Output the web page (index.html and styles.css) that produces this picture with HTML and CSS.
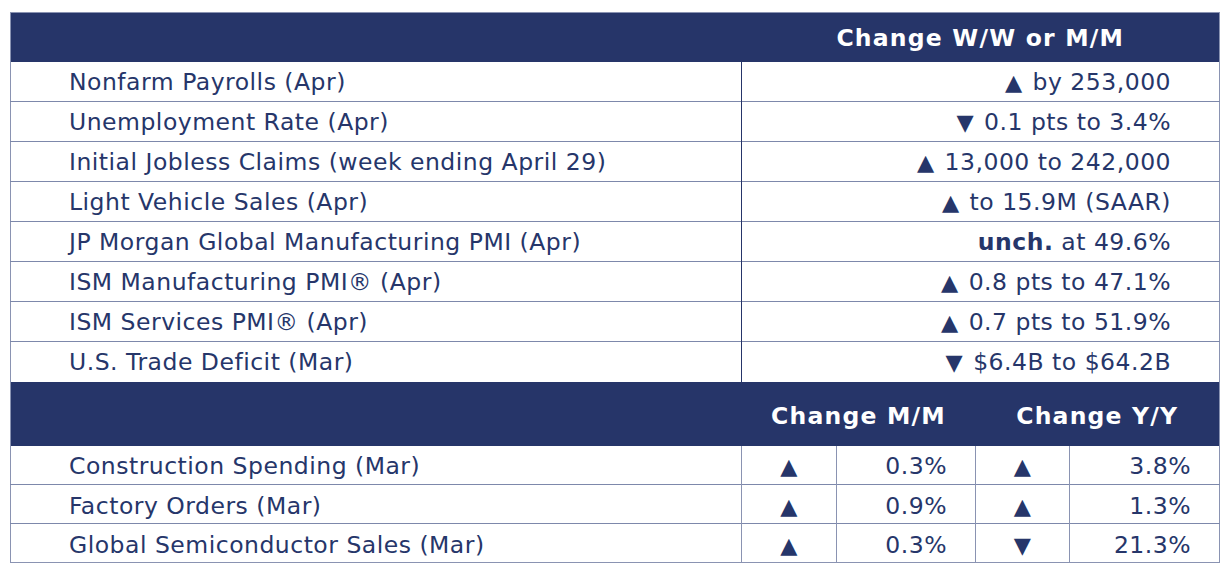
FILE: index.html
```html
<!DOCTYPE html>
<html>
<head>
<meta charset="utf-8">
<link rel="stylesheet" href="styles.css">
</head>
<body>
<table class="econ">
  <colgroup>
    <col class="c-label">
    <col class="c-a1">
    <col class="c-v1">
    <col class="c-a2">
    <col class="c-v2">
  </colgroup>
  <tr class="head head-1">
    <th></th>
    <th colspan="4" class="head-title">Change W/W or M/M</th>
  </tr>
  <tr class="row"><td class="label">Nonfarm Payrolls (Apr)</td><td colspan="4" class="val"><span class="tri">▲</span> by 253,000</td></tr>
  <tr class="row"><td class="label">Unemployment Rate (Apr)</td><td colspan="4" class="val"><span class="tri">▼</span> 0.1 pts to 3.4%</td></tr>
  <tr class="row"><td class="label">Initial Jobless Claims (week ending April 29)</td><td colspan="4" class="val"><span class="tri">▲</span> 13,000 to 242,000</td></tr>
  <tr class="row"><td class="label">Light Vehicle Sales (Apr)</td><td colspan="4" class="val"><span class="tri">▲</span> to 15.9M (SAAR)</td></tr>
  <tr class="row"><td class="label">JP Morgan Global Manufacturing PMI (Apr)</td><td colspan="4" class="val"><b>unch.</b> at 49.6%</td></tr>
  <tr class="row"><td class="label">ISM Manufacturing PMI® (Apr)</td><td colspan="4" class="val"><span class="tri">▲</span> 0.8 pts to 47.1%</td></tr>
  <tr class="row"><td class="label">ISM Services PMI® (Apr)</td><td colspan="4" class="val"><span class="tri">▲</span> 0.7 pts to 51.9%</td></tr>
  <tr class="row"><td class="label">U.S. Trade Deficit (Mar)</td><td colspan="4" class="val"><span class="tri">▼</span> $6.4B to $64.2B</td></tr>
  <tr class="head head-2">
    <th></th>
    <th colspan="2" class="head-title">Change M/M</th>
    <th colspan="2" class="head-title">Change Y/Y</th>
  </tr>
  <tr class="row row-b"><td class="label">Construction Spending (Mar)</td><td class="arrow"><span class="tri">▲</span></td><td class="num">0.3%</td><td class="arrow"><span class="tri">▲</span></td><td class="num">3.8%</td></tr>
  <tr class="row row-b"><td class="label">Factory Orders (Mar)</td><td class="arrow"><span class="tri">▲</span></td><td class="num">0.9%</td><td class="arrow"><span class="tri">▲</span></td><td class="num">1.3%</td></tr>
  <tr class="row row-b"><td class="label">Global Semiconductor Sales (Mar)</td><td class="arrow"><span class="tri">▲</span></td><td class="num">0.3%</td><td class="arrow"><span class="tri">▼</span></td><td class="num">21.3%</td></tr>
</table>
</body>
</html>
```
FILE: styles.css
```css
html, body {
  margin: 0;
  background: #ffffff;
}
body {
  padding: 12px 0 0 10px;
  font-family: "DejaVu Sans", Verdana, sans-serif;
  color: #26366a;
}
.econ {
  border-collapse: collapse;
  table-layout: fixed;
  width: 1210px;
  border: 1px solid #8a93b2;
  font-size: 23.5px;
  letter-spacing: 0.5px;
}
.c-label { width: 731px; }
.c-a1 { width: 95px; }
.c-v1 { width: 139px; }
.c-a2 { width: 94px; }
.c-v2 { width: 150px; }
.econ td, .econ th {
  padding: 0;
  white-space: nowrap;
}
.head th {
  background: #263569;
  color: #ffffff;
  font-weight: bold;
  text-align: center;
  letter-spacing: 1.2px;
}
.head-1 { height: 49px; }
.head-1 th { padding-top: 1px; }
.head-2 { height: 64px; }
.head-2 .head-title { padding-top: 4px; }
.row { height: 40px; }
.row td {
  border-top: 1px solid #7d88ab;
  vertical-align: middle;
  padding-top: 1px;
}
.head + .row td { border-top: none; }
.label {
  padding-left: 58px !important;
  border-right: 1px solid #263569;
}
.val {
  text-align: right;
  padding-right: 48px !important;
}
.val b { font-weight: bold; }
.tri {
  font-size: 0.95em;
  display: inline-block;
  margin-right: 2px;
}
.row-b { height: 39px; }
.row-b td { padding-top: 3px; }
.row-b .label { border-right: 1px solid #8a93b2; }
.arrow {
  text-align: center;
  border-right: 1px solid #8a93b2;
}
.arrow .tri { margin-right: 0; }
.num {
  text-align: right;
  padding-right: 28px !important;
}
.row-b .num:not(:last-child) { border-right: 1px solid #8a93b2; }
```
